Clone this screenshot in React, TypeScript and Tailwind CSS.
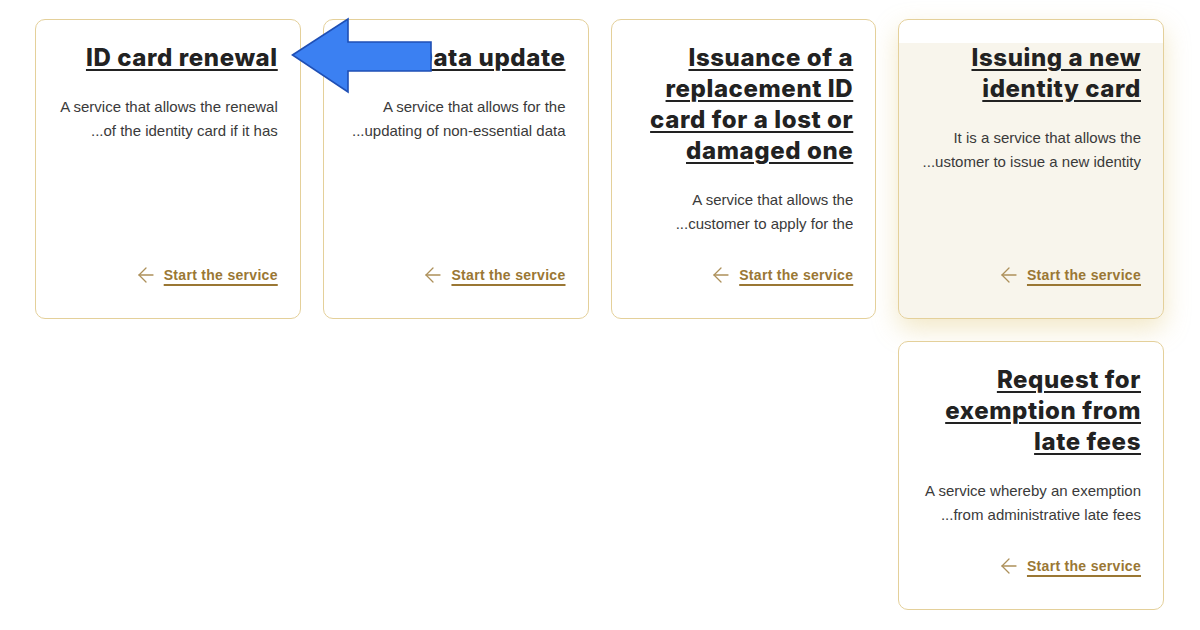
import React from 'react';
import { ArrowLeft } from 'lucide-react';

type Service = {
  title: string;
  lines: [string, string];
  active?: boolean;
};

// listed in reading order of the rtl grid (rightmost first)
const services: Service[] = [
  {
    title: 'Issuing a new identity card',
    lines: ['It is a service that allows the', '...ustomer to issue a new identity'],
    active: true,
  },
  {
    title: 'Issuance of a replacement ID card for a lost or damaged one',
    lines: ['A service that allows the', '...customer to apply for the'],
  },
  {
    title: 'Data update',
    lines: ['A service that allows for the', '...updating of non-essential data'],
  },
  {
    title: 'ID card renewal',
    lines: ['A service that allows the renewal', '...of the identity card if it has'],
  },
  {
    title: 'Request for exemption from late fees',
    lines: ['A service whereby an exemption', '...from administrative late fees'],
  },
];

const ServiceCard: React.FC<{ service: Service }> = ({ service }) => {
  const { title, lines, active } = service;
  return (
    <div
      className={`flex flex-col rounded-[10px] border border-[#e4d09a] pt-[22px] pb-[33px] pl-[22px] pr-[22px] ${
        active
          ? 'bg-[linear-gradient(to_bottom,#ffffff_23px,#f8f5ec_23px)] shadow-[0_10px_26px_rgba(220,190,100,0.36)]'
          : 'bg-white'
      }`}
    >
      <h3 className="text-[24px] leading-[31px] font-extrabold text-[#222222] underline decoration-2 underline-offset-[3px] font-['Inter',sans-serif] tracking-[0.6px]">
        {title}
      </h3>
      <div className="mt-[22px] text-[15px] leading-[24px] text-[#3a3a3a] font-['Liberation_Sans',Arial,sans-serif]">
        {lines.map((l) => (
          <p key={l} dir="ltr" className="text-right whitespace-nowrap overflow-hidden">
            {l}
          </p>
        ))}
      </div>
      <a
        href="#"
        className="mt-auto pt-[29px] flex items-center gap-[6px] h-[49px] text-[14px] leading-[20px] font-bold text-[#9a7734] font-['Liberation_Sans',Arial,sans-serif] tracking-[0.3px]"
      >
        <span className="underline underline-offset-[4px] decoration-[1.5px]">Start the service</span>
        <ArrowLeft size={24} strokeWidth={1.3} className="-my-[2px] text-[#ad905a]" />
      </a>
    </div>
  );
};

const App: React.FC = () => {
  return (
    <div className="relative w-[1200px] h-[630px] bg-white overflow-hidden">
      <div dir="rtl" className="grid grid-cols-4 gap-x-[22px] gap-y-[22px] pt-[19px] pl-[35px] pr-[36px] items-stretch">
        {services.map((s) => (
          <ServiceCard key={s.title} service={s} />
        ))}
      </div>

      {/* annotation arrow over the cards */}
      <svg
        className="absolute left-[291px] top-[17px]"
        width="142"
        height="78"
        viewBox="0 0 142 78"
      >
        <polygon
          points="1.5,38 57,2 57,25 140,25 140,54 57,54 57,75"
          fill="#3b80f2"
          stroke="#1f4fb5"
          strokeWidth="1.6"
          strokeLinejoin="miter"
        />
      </svg>
    </div>
  );
};

export default App;
